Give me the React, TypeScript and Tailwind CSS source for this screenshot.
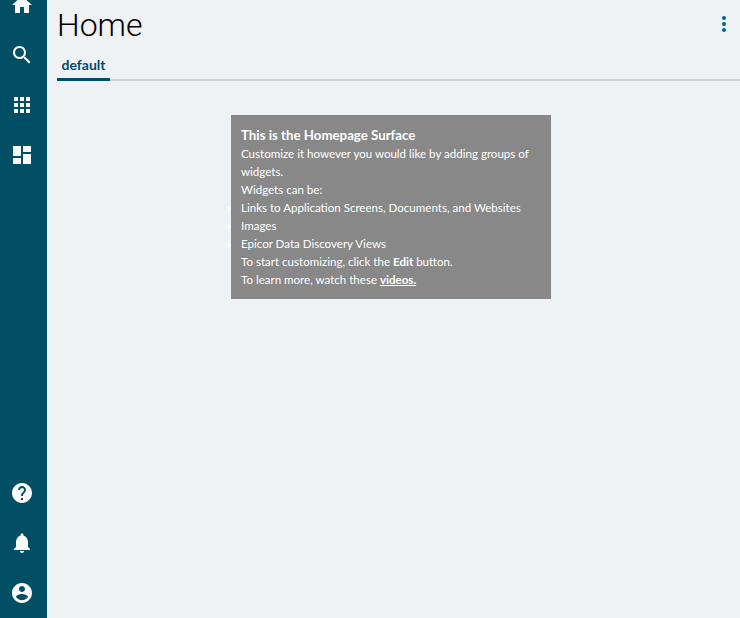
const Icon = ({ d, className = "w-6 h-6 fill-white" }: { d: string; className?: string }) => (
  <svg viewBox="0 0 24 24" className={className}><path d={d} /></svg>
);

const top = [
  "M10 20v-6h4v6h5v-8h3L12 3 2 12h3v8z",
  "M15.5 14h-.79l-.28-.27C15.41 12.59 16 11.11 16 9.5 16 5.91 13.09 3 9.5 3S3 5.91 3 9.5 5.91 16 9.5 16c1.61 0 3.09-.59 4.23-1.57l.27.28v.79l5 4.99L20.49 19l-4.99-5zm-6 0C7.01 14 5 11.99 5 9.5S7.01 5 9.5 5 14 7.01 14 9.5 11.99 14 9.5 14z",
  "M4 8h4V4H4v4zm6 12h4v-4h-4v4zm-6 0h4v-4H4v4zm0-6h4v-4H4v4zm6 0h4v-4h-4v4zm6-10v4h4V4h-4zm-6 4h4V4h-4v4zm6 6h4v-4h-4v4zm0 6h4v-4h-4v4z",
  "M3 13h8V3H3v10zm0 8h8v-6H3v6zm10 0h8V11h-8v10zm0-18v6h8V3h-8z",
];
const bottom = [
  "M12 2C6.48 2 2 6.48 2 12s4.48 10 10 10 10-4.48 10-10S17.52 2 12 2zm1 17h-2v-2h2v2zm2.07-7.75l-.9.92C13.45 12.9 13 13.5 13 15h-2v-.5c0-1.1.45-2.1 1.17-2.83l1.24-1.26c.37-.36.59-.86.59-1.41 0-1.1-.9-2-2-2s-2 .9-2 2H8c0-2.21 1.79-4 4-4s4 1.79 4 4c0 .88-.36 1.68-.93 2.25z",
  "M12 22c1.1 0 2-.9 2-2h-4c0 1.1.89 2 2 2zm6-6v-5c0-3.07-1.64-5.64-4.5-6.32V4c0-.83-.67-1.5-1.5-1.5s-1.5.67-1.5 1.5v.68C7.63 5.36 6 7.92 6 11v5l-2 2v1h16v-1l-2-2z",
  "M12 2C6.48 2 2 6.48 2 12s4.48 10 10 10 10-4.48 10-10S17.52 2 12 2zm0 3c1.66 0 3 1.34 3 3s-1.34 3-3 3-3-1.34-3-3 1.34-3 3-3zm0 14.2c-2.5 0-4.71-1.28-6-3.22.03-1.99 4-3.08 6-3.08 1.99 0 5.97 1.09 6 3.08-1.29 1.94-3.5 3.22-6 3.22z",
];

export default function App() {
  return (
    <div className="flex h-[618px] w-[740px] overflow-hidden bg-[#eef2f5] font-['Lato',sans-serif]">
      <nav className="flex w-[47px] shrink-0 flex-col justify-between overflow-hidden bg-[#004f64] pr-[3px]">
        <div className="-mt-5 flex flex-col">
          {top.map((d) => (
            <div key={d} className="flex h-[50px] items-center justify-center"><Icon d={d} /></div>
          ))}
        </div>
        <div className="flex flex-col">
          {bottom.map((d) => (
            <div key={d} className="flex h-[50px] items-center justify-center"><Icon d={d} /></div>
          ))}
        </div>
      </nav>
      <main className="flex min-w-0 flex-1 flex-col">
        <header className="flex h-[50px] items-center justify-between pl-2.5 pr-1">
          <h1 className="font-['Roboto',sans-serif] text-[32px] font-light leading-[50px] text-black">Home</h1>
          <Icon className="-mt-[2px] h-6 w-6 fill-[#0063a0]" d="M12 8c1.1 0 2-.9 2-2s-.9-2-2-2-2 .9-2 2 .9 2 2 2zm0 2c-1.1 0-2 .9-2 2s.9 2 2 2 2-.9 2-2-.9-2-2-2zm0 6c-1.1 0-2 .9-2 2s.9 2 2 2 2-.9 2-2-.9-2-2-2z" />
        </header>
        <div className="ml-2.5 border-b-2 border-[#ccd1d5]">
          <div className="-mb-[2px] h-[31px] w-[53px] border-b-[3px] border-[#004b6b] text-center text-[14px] font-bold leading-[30px] text-[#004b6b]">default</div>
        </div>
        <section className="ml-[184px] mt-[34px] h-[184px] w-[320px] bg-[#888888] px-2.5 pt-[11px] text-[11.55px] leading-[18px] text-white">
          <h2 className="h-[19px] text-[13.25px] font-bold">This is the Homepage Surface</h2>
          <p>Customize it however you would like by adding groups of widgets.</p>
          <p>Widgets can be:</p>
          <ul className="list-disc marker:text-white">
            <li>Links to Application Screens, Documents, and Websites</li>
            <li>Images</li>
            <li>Epicor Data Discovery Views</li>
          </ul>
          <p>To start customizing, click the <b className="font-bold">Edit</b> button.</p>
          <p>To learn more, watch these <a className="font-bold underline">videos.</a></p>
        </section>
      </main>
    </div>
  );
}
